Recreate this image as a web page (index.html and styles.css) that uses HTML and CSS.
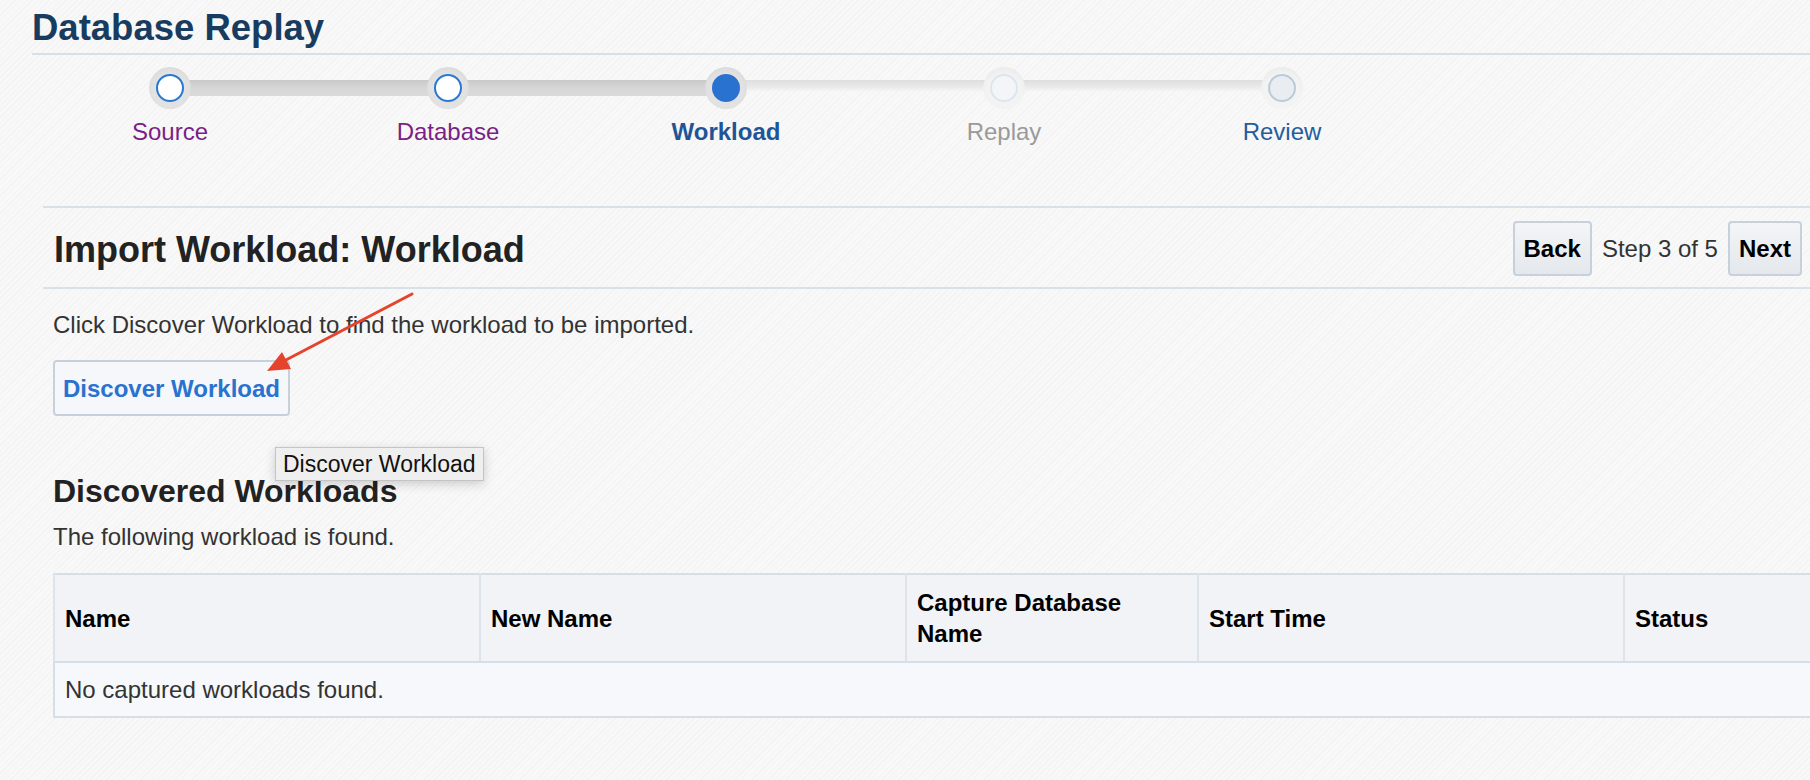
FILE: index.html
```html
<!DOCTYPE html>
<html>
<head>
<meta charset="utf-8">
<title>Database Replay</title>
<link rel="stylesheet" href="styles.css">
</head>
<body>
<div class="page">
  <h1 class="title">Database Replay</h1>

  <div class="train">
    <div class="step done link">
      <span class="node"><span class="dot"></span></span>
      <span class="label">Source</span>
    </div>
    <div class="step done">
      <span class="node"><span class="dot"></span></span>
      <span class="label">Database</span>
    </div>
    <div class="step current">
      <span class="node"><span class="dot"></span></span>
      <span class="label">Workload</span>
    </div>
    <div class="step disabled">
      <span class="node"><span class="dot"></span></span>
      <span class="label">Replay</span>
    </div>
    <div class="step next">
      <span class="node"><span class="dot"></span></span>
      <span class="label">Review</span>
    </div>
  </div>

  <div class="section">
    <div class="section-header">
      <h2 class="section-title">Import Workload: Workload</h2>
      <div class="nav">
        <button class="nav-btn">Back</button>
        <span class="step-count">Step 3 of 5</span>
        <button class="nav-btn">Next</button>
      </div>
    </div>

    <div class="section-body">
      <p class="hint">Click Discover Workload to find the workload to be imported.</p>
      <button class="discover-btn">Discover Workload</button>

      <h3 class="sub-title">Discovered Workloads</h3>
      <p class="sub-text">The following workload is found.</p>

      <table class="grid">
        <colgroup>
          <col class="c-wide"><col class="c-wide"><col class="c-narrow"><col class="c-wide"><col class="c-wide">
        </colgroup>
        <thead>
          <tr>
            <th>Name</th>
            <th>New Name</th>
            <th>Capture Database Name</th>
            <th>Start Time</th>
            <th>Status</th>
          </tr>
        </thead>
        <tbody>
          <tr>
            <td colspan="5">No captured workloads found.</td>
          </tr>
        </tbody>
      </table>
    </div>
  </div>

  <div class="tooltip">Discover Workload</div>

  <svg class="annotation" width="1810" height="780" viewBox="0 0 1810 780">
    <line x1="412" y1="294" x2="284" y2="361" stroke="#e5432b" stroke-width="3" stroke-linecap="round"/>
    <polygon points="267,371 291,369 282,352" fill="#e5432b"/>
  </svg>
</div>
</body>
</html>
```

FILE: styles.css
```css
html, body {
  margin: 0;
  padding: 0;
  width: 1810px;
  height: 780px;
  overflow: hidden;
}

body {
  font-family: "Liberation Sans", Arial, Helvetica, sans-serif;
  color: #333;
  background-color: #f6f6f6;
  background-image: repeating-linear-gradient(-45deg, #f3f3f3 0, #f3f3f3 1px, #f8f8f8 1px, #f8f8f8 4px);
}

.page {
  position: relative;
  padding-left: 32px;
  height: 780px;
}

.title {
  margin: 0;
  padding: 6px 0 3px;
  font-size: 36.5px;
  line-height: 44px;
  font-weight: bold;
  color: #183c5f;
  border-bottom: 2px solid #d5e0ea;
}

/* ---------- train ---------- */
.train {
  display: flex;
  margin-left: -1px;
  padding-top: 12px;
}

.step {
  position: relative;
  width: 278px;
  display: flex;
  flex-direction: column;
  align-items: center;
}

.step:not(:last-child)::after {
  content: "";
  position: absolute;
  left: 50%;
  width: 100%;
  top: 13px;
  height: 16px;
  background: linear-gradient(#c9c9c9, #d6d6d6 50%, #dadada);
}

.step.current::after,
.step.disabled::after {
  top: 13px;
  height: 11px;
  background: linear-gradient(#dedede, #e9e9e9 60%, rgba(240, 240, 240, 0.4));
}

.node {
  position: relative;
  z-index: 1;
  width: 42px;
  height: 42px;
  border-radius: 50%;
  background: radial-gradient(circle at 50% 55%, #e2e2e2 55%, #d3d3d3 100%);
  display: flex;
  align-items: center;
  justify-content: center;
}

.dot {
  box-sizing: border-box;
  width: 28px;
  height: 28px;
  border-radius: 50%;
  border: 2px solid #2a78d4;
  background: #fff;
}

.step.current .dot {
  background: #2a72d0;
  border-color: #2a72d0;
}

.step.disabled .node,
.step.next .node {
  background: radial-gradient(circle at 50% 60%, #f3f3f3 55%, #e3e3e3 100%);
}

.step.disabled .dot {
  background: #f3f5f8;
  border-color: #dde6ee;
}

.step.next .dot {
  background: #e9edf1;
  border-color: #bccbd9;
}

.label {
  margin-top: 9px;
  font-size: 24px;
  line-height: 28px;
  color: #7a1f86;
}

.step.current .label {
  color: #1f5597;
  font-weight: bold;
}

.step.disabled .label {
  color: #9a9a9a;
}

.step.next .label {
  color: #235d9e;
}

/* ---------- section ---------- */
.section {
  margin-top: 60px;
  margin-left: 11px;
}

.section-header {
  display: flex;
  align-items: center;
  justify-content: space-between;
  height: 79px;
  border-top: 2px solid #d8e1ea;
  border-bottom: 2px solid #d8e1ea;
}

.section-title {
  margin: 4px 0 0 11px;
  font-size: 36px;
  line-height: 44px;
  font-weight: bold;
  color: #222;
}

.nav {
  display: flex;
  align-items: center;
  gap: 10px;
  padding-right: 8px;
  margin-top: 2px;
}

.nav-btn {
  box-sizing: border-box;
  height: 55px;
  padding: 0 9px;
  font-family: "Liberation Sans", Arial, sans-serif;
  font-size: 24px;
  font-weight: bold;
  color: #000;
  background: linear-gradient(#f3f5f7, #e4e8ec);
  border: 2px solid #c7d1db;
  border-radius: 4px;
}

.step-count {
  font-size: 24px;
  color: #333;
}

.section-body {
  padding-left: 10px;
}

.hint {
  margin: 22px 0 0;
  font-size: 24px;
  line-height: 28px;
  color: #333;
}

.discover-btn {
  box-sizing: border-box;
  display: block;
  margin-top: 21px;
  height: 56px;
  width: 237px;
  padding: 2px 0 0;
  font-family: "Liberation Sans", Arial, sans-serif;
  font-size: 24px;
  font-weight: bold;
  color: #2a72d0;
  background: #f5f7fa;
  border: 2px solid #c8d1db;
  border-radius: 4px;
}

.sub-title {
  margin: 56px 0 0;
  font-size: 32px;
  line-height: 38px;
  font-weight: bold;
  color: #222;
}

.sub-text {
  margin: 13px 0 0;
  font-size: 24px;
  line-height: 28px;
  color: #333;
}

/* ---------- table ---------- */
.grid {
  margin-top: 22px;
  width: 1996px;
  table-layout: fixed;
  border-collapse: collapse;
  border: 2px solid #d6dee7;
}

.c-wide { width: 426px; }
.c-narrow { width: 292px; }

.grid th {
  height: 88px;
  box-sizing: border-box;
  padding: 12px 10px;
  text-align: left;
  vertical-align: middle;
  font-size: 24px;
  line-height: 31px;
  font-weight: bold;
  color: #000;
  background: #f1f3f7;
  border-left: 2px solid #dde3ea;
  border-bottom: 2px solid #d6dee7;
}

.grid td {
  height: 55px;
  box-sizing: border-box;
  padding: 0 10px;
  font-size: 24px;
  color: #333;
  background: #f6f8fb;
}

/* ---------- overlays ---------- */
.tooltip {
  position: absolute;
  left: 275px;
  top: 447px;
  box-sizing: border-box;
  height: 34px;
  padding: 0 7px;
  font-size: 23px;
  line-height: 32px;
  color: #111;
  background: #efefef;
  border: 1px solid #c4c4c4;
  box-shadow: 0 3px 10px rgba(0, 0, 0, 0.18);
}

.annotation {
  position: absolute;
  left: 0;
  top: 0;
  pointer-events: none;
}
```
